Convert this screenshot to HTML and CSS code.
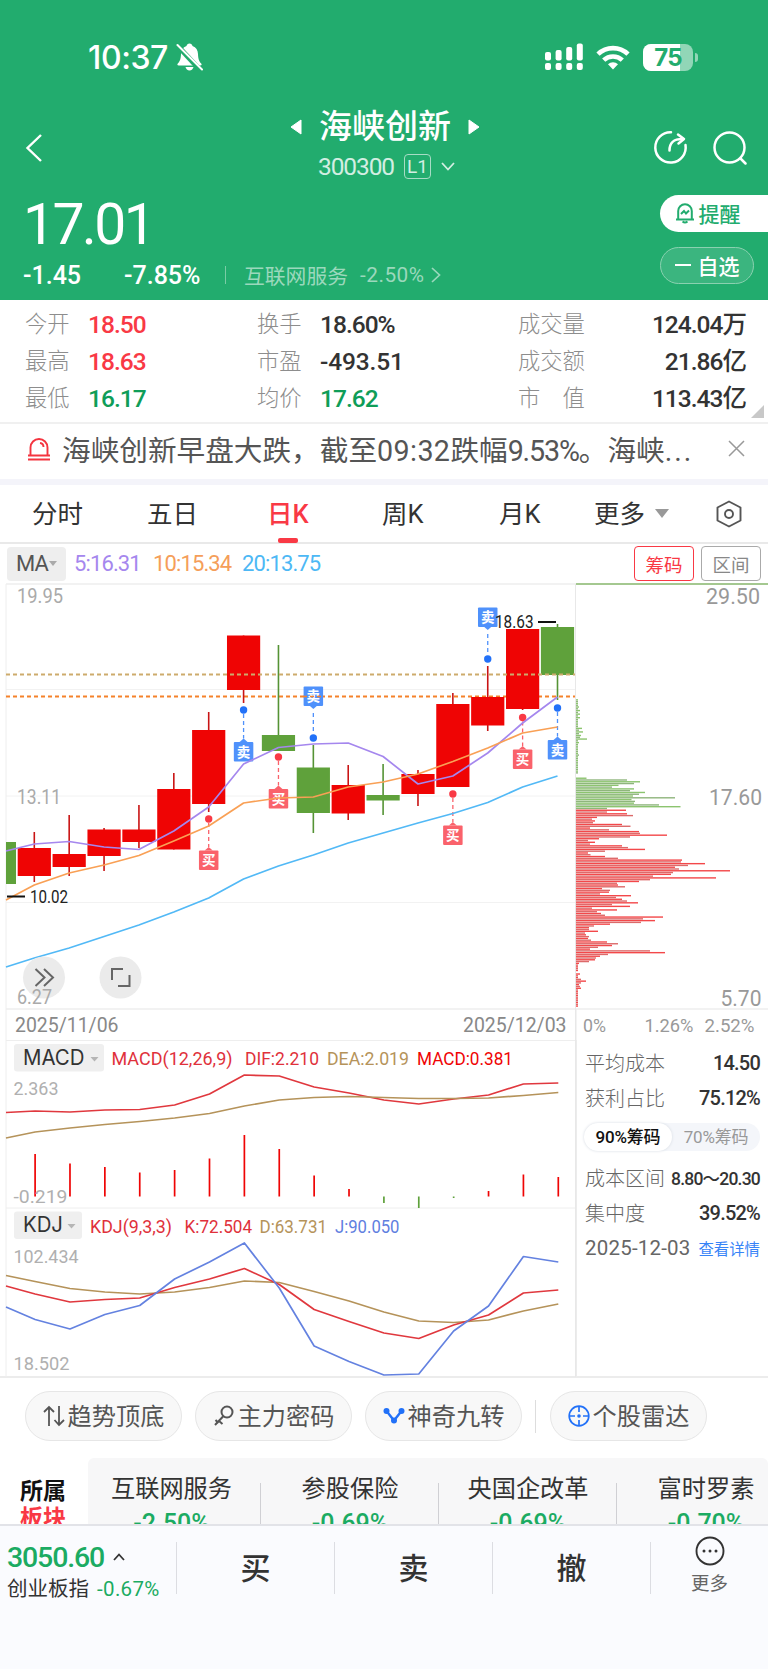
FILE: index.html
```html
<!DOCTYPE html>
<html lang="zh-CN">
<head>
    <meta charset="UTF-8">
    <meta name="viewport" content="width=device-width, initial-scale=1.0">
    <title>海峡创新 300300</title>
    <link rel="stylesheet" href="styles.css">
</head>
<body>

    <header class="header">
        <div class="status-bar">
            <div class="status-left">
                <span class="clock">10:37</span>
                <svg width="27" height="28" viewBox="0 0 27 28">
                    <path d="M13.500 0.500c-1.600 0-2.700 1-3 2.400C6.800 4.200 5.200 7 5 11c-.2 5-1 7.200-3.200 9.500-.8 1-.4 2 1 2h21.400c1.400 0 1.800-1 1-2C23 18.200 22.200 16 22 11c-.2-4-1.800-6.800-5.500-8.100-.3-1.400-1.400-2.400-3-2.400z" fill="#fff"/>
                    <path d="M9.500 24h8c-.4 2-2 3.400-4 3.400s-3.600-1.400-4-3.400z" fill="#fff"/>
                    <path d="M0 1L25 28" stroke="#22ac6e" stroke-width="5"/>
                    <path d="M1.500 2L26 26.500" stroke="#fff" stroke-width="2" stroke-linecap="round"/>
                </svg>
            </div>
            <div class="status-right">
                <svg width="38" height="28" viewBox="0 0 38 28" fill="#fff">
                    <rect x="0" y="9" width="6" height="8.500" rx="2"/>
                    <rect x="10.600" y="7" width="6" height="10.500" rx="2"/>
                    <rect x="21.200" y="4" width="6" height="13.500" rx="2"/>
                    <rect x="31.800" y="0.500" width="6" height="17" rx="2"/>
                    <rect x="0" y="20" width="6" height="7" rx="2"/>
                    <rect x="10.600" y="20" width="6" height="7" rx="2"/>
                    <rect x="21.200" y="20" width="6" height="7" rx="2"/>
                    <rect x="31.800" y="20" width="6" height="7" rx="2"/>
                </svg>
                <svg width="34" height="25" viewBox="0 0 34 25" fill="none" stroke="#fff" stroke-width="4.600">
                    <path d="M2 9.200a21.500 21.500 0 0 1 30 0"/>
                    <path d="M7.700 15.200a13.500 13.500 0 0 1 18.600 0"/>
                    <path d="M12 19.200a7.400 7.400 0 0 1 10 0L17 24.500z" fill="#fff" stroke="none"/>
                </svg>
                <div class="battery"><span class="battery-level"></span><b>75</b></div>
            </div>
        </div>

        <nav class="title-bar">
            <svg class="back" width="18" height="30" viewBox="0 0 18 30" fill="none" stroke="#fff" stroke-width="2.400"><path d="M16 2L2.500 15 16 28"/></svg>
            <div class="title">
                <div class="name-row">
                    <svg width="12" height="16" viewBox="0 0 12 16"><path d="M11 1v14L1 8z" fill="#fff" stroke="#fff" stroke-linejoin="round"/></svg>
                    <h1>海峡创新</h1>
                    <svg width="12" height="16" viewBox="0 0 12 16"><path d="M1 1v14l10-7z" fill="#fff" stroke="#fff" stroke-linejoin="round"/></svg>
                </div>
                <div class="code-row">
                    <span class="code num">300300</span>
                    <span class="level">L1</span>
                    <svg width="14" height="9" viewBox="0 0 14 9" fill="none" stroke="#d3eee2" stroke-width="1.800"><path d="M1 1l6 6.500L13 1"/></svg>
                </div>
            </div>
            <div class="title-icons">
                <svg width="35" height="35" viewBox="0 0 35 35" fill="none" stroke="#fff" stroke-width="2.500" stroke-linecap="round">
                    <path d="M18 2.200A15.200 15.200 0 1 0 32.500 15"/>
                    <path d="M16.500 20.500c0-8 4-11.500 13-11.500"/>
                    <path d="M25 4.500l6 4.600-5.500 4.400" stroke-linejoin="round"/>
                </svg>
                <svg width="35" height="35" viewBox="0 0 35 35" fill="none" stroke="#fff" stroke-width="2.500" stroke-linecap="round">
                    <circle cx="16.500" cy="17.500" r="15"/>
                    <path d="M27.500 28.500l5 5"/>
                </svg>
            </div>
        </nav>

        <div class="quote">
            <div class="quote-main">
                <div class="price num">17.01</div>
                <div class="change-row">
                    <span class="change num">-1.45</span>
                    <span class="percent num">-7.85%</span>
                    <span class="sector-link">互联网服务 <i>-2.50%</i>
                        <svg width="10" height="16" viewBox="0 0 10 16" fill="none" stroke="#9bd8bc" stroke-width="1.700"><path d="M1 1l7.500 7L1 15"/></svg>
                    </span>
                </div>
            </div>
            <div class="quote-actions">
                <button class="remind">
                    <svg width="20" height="22" viewBox="0 0 20 22" fill="none" stroke="#22ac6e" stroke-width="2">
                        <path d="M1 17.500h18M3.200 17V9a6.800 6.800 0 0 1 13.600 0v8M7.500 19.500q2.500 2 5 0"/>
                        <path d="M6 12l3-3 2 2.500 3-3"/>
                    </svg>提醒
                </button>
                <button class="favorite"><span class="minus"></span>自选</button>
            </div>
        </div>
    </header>

    <section class="stats">
        <dl><dt>今开</dt><dd class="num up">18.50</dd><dt>最高</dt><dd class="num up">18.63</dd><dt>最低</dt><dd class="num down">16.17</dd></dl>
        <dl><dt>换手</dt><dd class="num">18.60%</dd><dt>市盈</dt><dd class="num loose">-493.51</dd><dt>均价</dt><dd class="num down">17.62</dd></dl>
        <dl class="wide"><dt>成交量</dt><dd class="num">124.04万</dd><dt>成交额</dt><dd class="num">21.86亿</dd><dt>市　值</dt><dd class="num">113.43亿</dd></dl>
        <span class="corner"></span>
    </section>

    <section class="news">
        <svg width="22" height="24" viewBox="0 0 22 24" fill="none" stroke="#f4343f" stroke-width="1.900">
            <path d="M2.500 18.500V10.500a8.500 8.500 0 0 1 17 0v8M0 18.500h22M0 22.500h22M12 6q3.500.5 3.500 4"/>
        </svg>
        <p>海峡创新早盘大跌，截至<span class="time">09:32</span>跌幅<span class="num">9.53%</span>。海峡<span class="dots">...</span></p>
        <svg width="17" height="17" viewBox="0 0 17 17" stroke="#999" stroke-width="1.500"><path d="M1 1l15 15M16 1L1 16"/></svg>
    </section>

    <nav class="tabs">
        <a>分时</a>
        <a>五日</a>
        <a class="active">日K</a>
        <a>周K</a>
        <a>月K</a>
        <a class="more">更多<i></i></a>
        <svg width="28" height="28" viewBox="0 0 28 28" fill="none" stroke="#555" stroke-width="1.900">
            <path d="M14 1.500L25.500 7.500v13L14 26.500 2.500 20.500v-13z" stroke-linejoin="round"/>
            <circle cx="14" cy="14" r="4"/>
        </svg>
    </nav>

    <section class="indicator">
        <button class="ma-select">MA<i></i></button>
        <span class="ma5 num">5:16.31</span>
        <span class="ma10 num">10:15.34</span>
        <span class="ma20 num">20:13.75</span>
        <button class="chip active">筹码</button>
        <button class="chip">区间</button>
    </section>

    <main class="charts">
        <svg id="kline" class="kline" width="576" height="795" viewBox="0 583 576 795"></svg>
        <aside class="side">
            <svg id="profile" class="profile" width="192" height="457" viewBox="576 583 192 457"></svg>
            <div class="cost">
                <div class="cost-row"><span>平均成本</span><b class="num">14.50</b></div>
                <div class="cost-row"><span>获利占比</span><b class="num">75.12%</b></div>
                <div class="toggle"><span class="on">90%筹码</span><span>70%筹码</span></div>
                <div class="cost-row"><span>成本区间</span><b class="num range">8.80～20.30</b></div>
                <div class="cost-row"><span>集中度</span><b class="num">39.52%</b></div>
                <div class="cost-row"><span class="num date">2025-12-03</span><a>查看详情</a></div>
            </div>
        </aside>
    </main>

    <section class="tools">
        <button>
            <svg width="22" height="24" viewBox="0 0 22 24" fill="none" stroke="#555" stroke-width="1.800"><path d="M6 22V3M1 8l5-5 5 5M16 2v19M11.500 16l4.500 5 5-5"/></svg><span>趋势顶底</span>
        </button>
        <button>
            <svg width="22" height="24" viewBox="0 0 22 24" fill="none" stroke="#555" stroke-width="2"><circle cx="14" cy="8" r="5.500"/><path d="M10.500 12L2 21M6 17l3.500 3M2.500 16l3 3"/></svg><span>主力密码</span>
        </button>
        <button>
            <svg width="22" height="24" viewBox="0 0 22 24"><path d="M3.500 7l7.500 9.500L18.500 7" fill="none" stroke="#2271f8" stroke-width="2.400"/><circle cx="3.500" cy="7" r="3" fill="#2271f8"/><circle cx="18.500" cy="7" r="3" fill="#2271f8"/><circle cx="11" cy="16.500" r="3" fill="#2271f8"/></svg><span>神奇九转</span>
        </button>
        <div class="divider"></div>
        <button>
            <svg width="22" height="24" viewBox="0 0 22 24" fill="none" stroke="#2271f8" stroke-width="1.700"><circle cx="11" cy="12" r="9.800"/><path d="M11 2v6M11 16v6M1 12h6M15 12h6"/><circle cx="11" cy="12" r="1.800" fill="#2271f8" stroke="none"/></svg><span>个股雷达</span>
        </button>
    </section>

    <section class="sectors">
        <div class="sectors-title">所属<em>板块</em></div>
        <div class="sector-list">
            <div>互联网服务<b class="num">-2.50%</b></div>
            <div>参股保险<b class="num">-0.69%</b></div>
            <div>央国企改革<b class="num">-0.69%</b></div>
            <div>富时罗素<b class="num">-0.70%</b></div>
        </div>
    </section>

    <footer class="bottom-bar">
        <div class="index">
            <div class="index-value num">3050.60 <svg width="12" height="8" viewBox="0 0 12 8" fill="none" stroke="#333" stroke-width="1.800"><path d="M1 7l5-5.500L11 7"/></svg></div>
            <div class="index-name">创业板指 <span>-0.67%</span></div>
        </div>
        <button>买</button>
        <button>卖</button>
        <button>撤</button>
        <div class="bottom-more">
            <svg width="30" height="30" viewBox="0 0 30 30"><circle cx="15" cy="15" r="13.500" fill="none" stroke="#333" stroke-width="1.900"/><g fill="#333"><circle cx="9" cy="15" r="1.500"/><circle cx="15" cy="15" r="1.500"/><circle cx="21" cy="15" r="1.500"/></g></svg>
            更多
        </div>
    </footer>

    <script src="chart.js"></script>
</body>
</html>
```
FILE: styles.css
```css
* {
    box-sizing: border-box;
}

body {
    margin: 0;
    width: 768px;
    height: 1669px;
    overflow: hidden;
    background-color: #fff;
    color: #333;
    font-family: Roboto, "Noto Sans CJK SC", sans-serif;
}

button {
    padding: 0;
    border: none;
    background: none;
    color: inherit;
    font-family: inherit;
}

h1, p, dl, dd {
    margin: 0;
}

i, em {
    font-style: normal;
}

svg {
    display: block;
    flex: none;
}

.num {
    letter-spacing: -0.04em;
}

.up {
    color: #f93945;
}

.down {
    color: #0f9d58;
}

/* header */
.header {
    height: 300px;
    background-color: #22ac6e;
    color: #fff;
}

.status-bar {
    display: flex;
    justify-content: space-between;
    height: 100px;
    padding: 43px 70px 0 88px;
}

.status-left, .status-right {
    display: flex;
    height: 28px;
    align-items: center;
}

.status-left {
    gap: 8px;
}

.status-right {
    gap: 13px;
}

.clock {
    font-family: Inter, sans-serif;
    font-size: 32px;
    font-weight: 500;
    letter-spacing: -0.400px;
}

.battery {
    position: relative;
    width: 50px;
    height: 27px;
    margin-right: 5px;
    border-radius: 8px;
    background-color: #91d6b7;
    overflow: hidden;
    text-align: center;
}

.status-right::after {
    content: "";
    width: 3px;
    height: 9px;
    margin-left: -16px;
    border-radius: 0 3px 3px 0;
    background-color: #91d6b7;
}

.battery-level {
    position: absolute;
    inset: 0 auto 0 0;
    width: 37px;
    background-color: #fff;
}

.battery b {
    position: relative;
    color: #22ac6e;
    font: 700 24px/27px Inter, sans-serif;
    letter-spacing: -0.800px;
}

.title-bar {
    display: flex;
    justify-content: space-between;
    height: 90px;
    padding: 0 20px 0 25px;
}

.back {
    margin-top: 33px;
}

.title {
    padding-left: 74px;
}

.name-row {
    display: flex;
    align-items: center;
    justify-content: center;
    gap: 17px;
    height: 53px;
}

.name-row h1 {
    font-size: 33px;
    font-weight: 500;
    line-height: 52px;
}

.code-row {
    display: flex;
    align-items: center;
    gap: 10px;
    padding-left: 28px;
    height: 27px;
    color: #d3eee2;
}

.code {
    font-size: 24.500px;
    letter-spacing: -1.100px;
}

.level {
    width: 27px;
    height: 25px;
    border: 1px solid #a7dcc5;
    border-radius: 4px;
    font-size: 19px;
    line-height: 24px;
    text-align: center;
}

.title-icons {
    display: flex;
    gap: 25px;
    padding-top: 30px;
}

.quote {
    display: flex;
    justify-content: space-between;
}

.quote-main {
    padding-left: 23px;
}

.price {
    height: 68px;
    font-size: 57px;
    line-height: 69px;
    letter-spacing: -2.600px;
}

.change-row {
    display: flex;
    align-items: center;
    height: 34px;
    font-size: 25px;
    font-weight: 500;
}

.change {
    width: 101px;
    letter-spacing: 0;
}

.percent {
    width: 101px;
    letter-spacing: 0;
}

.sector-link {
    display: flex;
    align-items: center;
    gap: 12px;
    height: 18px;
    padding-left: 18px;
    border-left: 1px solid #7acca5;
    color: #9bd8bc;
    font-size: 20.800px;
    font-weight: 400;
}

.sector-link i {
    letter-spacing: 0.500px;
}

.sector-link svg {
    margin-left: -6px;
}

.quote-actions {
    width: 108px;
    padding-top: 5px;
}

.remind, .favorite {
    display: flex;
    align-items: center;
    justify-content: center;
    height: 37px;
    padding-bottom: 2px;
    font-size: 21px;
    font-weight: 500;
    gap: 4px;
}

.remind {
    width: 108px;
    padding-right: 13px;
    border-radius: 19px 0 0 19px;
    background-color: #fff;
    color: #22ac6e;
}

.favorite {
    width: 94px;
    margin-top: 15px;
    border: 1px solid #8ad1b0;
    border-radius: 19px;
    background-color: #3bb57f;
    gap: 7px;
}

.minus {
    width: 16px;
    height: 2px;
    background-color: #fff;
}

/* day statistics */
.stats {
    position: relative;
    display: flex;
    height: 124px;
    padding: 7px 22px 0 25px;
    border-bottom: 2px solid #f0f0f0;
}

.stats dl {
    display: grid;
    grid-template-columns: 63px auto;
    grid-auto-rows: 36.700px;
    align-items: center;
    align-content: start;
    width: 232px;
    line-height: 36px;
}

.stats dt {
    color: #8d8d8d;
    font-size: 22.300px;
    font-weight: 300;
    margin-top: -2px;
}

.stats dd {
    font-size: 24.500px;
    font-weight: 500;
    white-space: nowrap;
}

.stats .loose {
    letter-spacing: -0.005em;
}

.stats .wide {
    grid-template-columns: 75px 1fr;
    width: 228px;
    margin-left: 29px;
}

.wide dd {
    text-align: right;
}

.corner {
    position: absolute;
    right: 4px;
    bottom: 4px;
    border-left: 13px solid transparent;
    border-bottom: 13px solid #c8c8c8;
}

/* news line */
.news {
    display: flex;
    align-items: center;
    height: 61px;
    padding: 0 23px 6px 28px;
    border-bottom: 6px solid #f4f4fa;
}

.news p {
    flex: 1;
    padding: 5px 0 0 12px;
    color: #555;
    font-size: 28.650px;
    line-height: 48px;
    white-space: nowrap;
}

.news .time {
    letter-spacing: 0.400px;
}

.news .dots {
    letter-spacing: 2px;
}

/* period tabs */
.tabs {
    display: flex;
    align-items: center;
    height: 59px;
    padding-left: 32px;
    border-bottom: 2px solid #e9e9e9;
    font-size: 25.500px;
}

.tabs a {
    position: relative;
    width: 115px;
    line-height: 56px;
}

.tabs a:nth-child(2) {
    width: 120px;
}

.tabs a:nth-child(4) {
    width: 117px;
}

.tabs a:nth-child(5) {
    width: 95px;
}

.tabs .active {
    color: #f93945;
    font-weight: 500;
}

.tabs .active::after {
    content: "";
    position: absolute;
    left: 11px;
    bottom: -1px;
    width: 20px;
    height: 5px;
    border-radius: 2px;
    background-color: #f93945;
}

.tabs .more {
    display: flex;
    align-items: center;
    gap: 10px;
    width: 121px;
}

.more i {
    border: 7px solid transparent;
    border-top: 9px solid #999;
    border-bottom: 0;
}

/* moving averages */
.indicator {
    display: flex;
    align-items: center;
    height: 39px;
    padding-left: 7px;
    font-size: 22px;
}

.ma-select {
    display: flex;
    align-items: center;
    justify-content: center;
    gap: 1px;
    width: 59px;
    height: 34px;
    border-radius: 4px;
    background-color: #eee;
    color: #555;
    font-size: 22px;
    letter-spacing: -0.800px;
}

.ma-select i {
    border: 4px solid transparent;
    border-top: 5px solid #aaa;
    border-bottom: 0;
}

.ma5 {
    width: 79px;
    margin-left: 8px;
    color: #a587ee;
}

.ma10 {
    width: 89px;
    color: #f59e59;
}

.ma20 {
    flex: 1;
    color: #4db8f5;
}

.chip {
    width: 60px;
    height: 35px;
    margin-right: 7px;
    border: 1px solid #aaa;
    border-radius: 4px;
    color: #888;
    font-size: 18.500px;
}

.chip.active {
    border-color: #f93945;
    color: #f93945;
}

/* charts */
.charts {
    display: flex;
    height: 795px;
    border-bottom: 2px solid #ececec;
}

.side {
    width: 192px;
}

.kline text, .profile text {
    font-family: Roboto, "Noto Sans CJK SC", sans-serif;
}

.kline .chip-label {
    font-family: Inter, sans-serif;
}

.cost {
    padding: 5px 8px 0;
    border-left: 1px solid #ececec;
    height: 337px;
}

.cost-row {
    display: flex;
    align-items: center;
    justify-content: space-between;
    height: 35px;
    color: #666;
    font-size: 20px;
    white-space: nowrap;
}

.cost-row span {
    font-weight: 300;
}

.cost-row b {
    color: #333;
    font-size: 20px;
    font-weight: 500;
    letter-spacing: -0.040em;
}

.cost-row .range {
    font-size: 17.500px;
    letter-spacing: -0.045em;
}

.cost-row .date {
    font-size: 20.500px;
    font-weight: 400;
    letter-spacing: 0.010em;
}

.cost-row a {
    color: #3784f7;
    font-size: 15.400px;
}

.toggle {
    display: flex;
    height: 28px;
    margin: 8px 0 9px -1px;
    border-radius: 14px;
    background-color: #f4f6fa;
    color: #999;
    font-size: 17px;
    line-height: 28px;
    letter-spacing: -0.200px;
}

.toggle span {
    width: 88px;
    text-align: center;
}

.toggle .on {
    border-radius: 14px;
    background-color: #fff;
    box-shadow: 0 0 3px #d5dae2;
    color: #111;
    font-weight: 500;
}

/* tool pills */
.tools {
    display: flex;
    align-items: center;
    gap: 13px;
    height: 50px;
    margin-top: 13px;
    padding-left: 25px;
}

.tools button {
    display: flex;
    align-items: center;
    justify-content: center;
    gap: 3px;
    width: 157px;
    height: 50px;
    border: 1px solid #e6e6e6;
    border-radius: 25px;
    background-color: #f8f8f8;
    color: #555;
    font-size: 24.200px;
}

.tools span {
    padding-bottom: 3px;
}

.tools .divider {
    width: 1px;
    height: 33px;
    margin-right: 1px;
    background-color: #ddd;
}

/* sector strip */
.sectors {
    display: flex;
    height: 83px;
    padding-top: 17px;
    overflow: hidden;
}

.sectors-title {
    width: 88px;
    padding: 20px 0 0 20px;
    color: #111;
    font-size: 23px;
    font-weight: 700;
    line-height: 27px;
}

.sectors-title em {
    display: block;
    color: #f93945;
}

.sector-list {
    display: flex;
    width: 680px;
    height: 100px;
    border-radius: 6px 6px 0 0;
    background-color: #f7f7f8;
    overflow: hidden;
}

.sector-list div {
    flex: none;
    width: 178px;
    padding-top: 13px;
    font-size: 24.200px;
    line-height: 36px;
    text-align: center;
    background: linear-gradient(#d0d0d4, #d0d0d4) no-repeat 100% 25px / 1px 80px;
}

.sector-list div:first-child {
    width: 173px;
    padding-right: 6px;
}

.sector-list b {
    display: block;
    margin-top: -1px;
    color: #1bab62;
    font-size: 25px;
    font-weight: 500;
    line-height: 36px;
    letter-spacing: 0;
}

/* bottom trade bar */
.bottom-bar {
    display: flex;
    height: 145px;
    padding-top: 16px;
    border-top: 2px solid #e2e3e8;
    background-color: #fafbfe;
}

.index {
    width: 176px;
    padding-left: 7px;
}

.index-value {
    display: flex;
    align-items: center;
    gap: 9px;
    height: 30px;
    color: #1bab62;
    font-size: 28.500px;
    font-weight: 500;
}

.index-name {
    font-size: 20.500px;
    line-height: 30px;
    margin-top: 2px;
    white-space: nowrap;
}

.index-name span {
    margin-left: 3px;
    color: #1bab62;
    letter-spacing: 0.300px;
}

.bottom-bar button {
    width: 158px;
    height: 52px;
    padding-bottom: 5px;
    border-left: 1px solid #dcdde2;
    font-size: 30px;
    font-weight: 500;
}

.bottom-more {
    display: flex;
    flex-direction: column;
    align-items: center;
    width: 118px;
    height: 52px;
    border-left: 1px solid #dcdde2;
    color: #666;
    font-size: 18.500px;
    line-height: 30px;
}

.bottom-more svg {
    margin: -6px 0 3px;
}
```
FILE: chart.js
```js
const RED = '#ef0404';
const GREEN = '#5fa13b';
const STEP = 34.88;
const FIRST = 34.3;

// [direction, high, body top, body bottom, low]
const candles = [
    [1, 832, 848, 876, 882],
    [1, 815, 854, 867, 876],
    [1, 828, 829.5, 856, 871],
    [1, 805, 829.5, 842, 848],
    [1, 773, 789, 849.5, 849.5],
    [1, 712, 730, 804, 812],
    [1, 635.5, 635.5, 690, 703],
    [0, 645, 735, 751, 751],
    [0, 745, 767.5, 813, 833],
    [1, 765, 785, 813.5, 820],
    [0, 764, 795, 800.5, 815],
    [1, 770, 774, 794, 806],
    [1, 693, 704, 787, 787],
    [1, 666, 697, 725.5, 731],
    [1, 629, 629, 709, 710],
    [0, 624, 627, 675, 700]
];

// each line starts at the left edge of the plot, then one value per candle
const ma5 = [851, 844, 841.5, 847, 849.5, 831, 807, 764, 747.5, 744, 743, 756.5, 784, 776, 753, 723, 697];
const ma10 = [900, 885, 873, 865, 855.5, 841, 826, 803, 798, 797, 787, 782, 774, 761.5, 748, 733, 727];
const ma20 = [967, 958, 948, 936.5, 925, 912, 898, 879, 866, 855, 843, 833, 823, 813.5, 802.5, 787, 776];
const dif = [1112.5, 1111, 1112, 1110, 1109.5, 1105, 1094, 1075, 1076, 1087, 1093, 1100, 1104, 1099, 1095, 1084, 1083];
const dea = [1138, 1132, 1128, 1124.5, 1121.5, 1118, 1113.5, 1106, 1100, 1097.5, 1096.5, 1097.5, 1098.5, 1098.5, 1098, 1095.5, 1092.5];
const macd = [1154, 1163.5, 1167, 1172.5, 1170, 1158.5, 1135, 1149, 1175.5, 1189, 1203, 1208, 1198, 1191, 1174.5, 1177];
const k = [1286, 1294, 1302, 1299.5, 1298, 1287.5, 1279, 1268.5, 1284.5, 1309.5, 1321.5, 1333, 1338.5, 1325, 1315, 1293, 1290];
const d = [1275.5, 1281.5, 1288.5, 1292, 1294, 1292, 1287.5, 1281, 1282.5, 1291.5, 1301, 1312, 1321, 1322.5, 1320, 1311, 1304];
const j = [1307, 1319.5, 1329, 1314.5, 1305.5, 1279, 1262, 1243, 1288, 1346, 1361.5, 1375, 1374, 1331, 1306, 1256.5, 1262];

// [candle index, label, dot y, box top]
const marks = [
    [5, '买', 819, 850.5],
    [6, '卖', 710, 742],
    [7, '买', 757, 789],
    [8, '卖', 738, 686.5],
    [12, '买', 794, 825.5],
    [13, '卖', 659, 607.5],
    [14, '买', 717.5, 749.5],
    [15, '卖', 708, 740]
];

const profile = [
    2, 2, 2, 2, 3, 2, 4, 2, 4, 2, 4, 2, 2, 2, 2, 2, 6, 3, 7, 3, 5, 4, 11, 2, 3, 2, 2, 2, 2, 2, 2, 3, 2, 2, 2, 2, 2, 2, 2, 2, 2, 2,
    0, 0, 10.5, 51, 64, 58, 42.5, 36, 58, 54, 69, 63, 57, 99, 55.5, 59, 58, 83, 104.5, 31,
    50, 31, 51, 57, 21, 16, 19, 17, 46, 54.5, 14, 33, 63, 64, 91, 54, 23, 12, 19, 14, 46, 52, 69, 29, 12, 14.5, 29, 42,
    106, 105, 129, 112, 99, 103, 154, 97, 95, 77, 140, 74, 63, 41, 42, 49, 26, 34, 33, 24, 55, 40, 46, 51, 62, 36, 54, 16, 41, 21, 25, 29,
    87, 67, 79, 65, 34, 18, 13, 13, 22, 9, 10, 13, 12, 15, 31, 42, 36, 22, 14, 74, 89, 32, 24, 20, 19, 13, 3, 2, 2, 2, 2,
    0, 4, 2, 2, 5, 10, 5, 3, 4, 5, 2, 2, 2, 2, 2, 2, 2, 2, 2, 2
];

const cx = i => FIRST + i * STEP;

function line(x1, y1, x2, y2, color, width = 1, extra = '') {
    return `<line x1="${x1}" y1="${y1}" x2="${x2}" y2="${y2}" stroke="${color}" stroke-width="${width}" ${extra}/>`;
}

function rect(x, y, w, h, fill, rx = 0) {
    return `<rect x="${x}" y="${y}" width="${w}" height="${h}" rx="${rx}" fill="${fill}"/>`;
}

function label(x, y, width, size, color, text, extra = '') {
    return `<text x="${x}" y="${y}" font-size="${size}" fill="${color}" textLength="${width}" lengthAdjust="spacingAndGlyphs" ${extra}>${text}</text>`;
}

function curve(values, color, offset = 0) {
    const points = values.map((y, i) => i === 0 ? `6,${y}` : `${cx(i - 1) + offset},${y}`);
    return `<polyline points="${points.join(' ')}" fill="none" stroke="${color}" stroke-width="1.700" stroke-linejoin="round"/>`;
}

function drawMark([index, text, dot, top]) {
    const x = cx(index);
    const buy = text === '买';
    const light = buy ? '#fa626b' : '#4f91fb';
    const above = top < dot;
    const edge = above ? top + 19 : top;
    const tip = above ? edge + 3.5 : edge - 3.5;
    return line(x, above ? tip + 4 : dot + 4, x, above ? dot - 4 : tip, light, 1.300, 'stroke-dasharray="4 3"')
        + `<circle cx="${x}" cy="${dot}" r="3.700" fill="${buy ? '#f93945' : '#2271f8'}"/>`
        + rect(x - 9.75, top, 19.5, 19.5, light, 1)
        + `<path d="M${x - 4} ${edge}L${x} ${tip}L${x + 4} ${edge}z" fill="${light}"/>`
        + `<text x="${x}" y="${top + 14.5}" font-size="13.500" font-weight="700" fill="#fff" text-anchor="middle">${text}</text>`;
}

function drawKline() {
    let out = '';
    out += line(6, 584, 576, 584, '#eee', 1.500);
    [689.5, 796, 902.5].forEach(y => out += line(6, y, 576, y, '#f2f2f2', 1));
    out += line(6, 1009, 576, 1009, '#eee', 1.500);
    out += line(6, 1040.5, 576, 1040.5, '#eee');
    out += line(6, 1208, 576, 1208, '#eee');
    out += line(6, 584, 6, 1377, '#eee');
    out += line(575.5, 584, 575.5, 1377, '#e8e8e8');

    out += label(17, 603, 46, 20, '#aaa', '19.95');
    out += label(17, 804, 44, 20, '#aaa', '13.11');

    out += line(6, 696.5, 575, 696.5, '#f5822a', 1.800, 'stroke-dasharray="4 3"');
    out += rect(6, 842, 10, 42, GREEN);
    candles.forEach(([up, high, top, bottom, low], i) => {
        const color = up ? RED : GREEN;
        out += line(cx(i), high, cx(i), low, up ? '#c91414' : '#559335', 1.600);
        out += rect(cx(i) - 16.6, top, 33.2, bottom - top, color);
    });
    out += line(6, 674.5, 575, 674.5, '#cdab6c', 1.800, 'stroke-dasharray="4 3"');
    marks.forEach(mark => out += drawMark(mark));
    out += line(303, 696.5, 324, 696.5, '#f5822a', 1.500, 'stroke-dasharray="4 3"');
    out += curve(ma5, '#a587ee') + curve(ma10, '#f9a055') + curve(ma20, '#52b9f6');

    out += label(495, 628, 38.5, 17.500, '#222', '18.63');
    out += line(538, 622, 556, 622, '#111', 2);
    out += label(30, 903, 38, 17.500, '#222', '10.02');
    out += line(7, 896.5, 25, 896.5, '#111', 2);

    out += '<circle cx="44" cy="977.500" r="21" fill="#ebebeb"/><circle cx="120.500" cy="977.500" r="21" fill="#ebebeb"/>';
    out += '<path d="M35.500 969l9 8.500-9 8.500M44 969l9 8.500-9 8.500M123 969h-11v11M118 986h11.500v-11" fill="none" stroke="#666" stroke-width="2"/>';
    out += label(17, 1004, 35, 20, '#aaa', '6.27');
    out += label(15, 1032, 103.5, 19.500, '#888', '2025/11/06');
    out += label(463, 1032, 103.5, 19.500, '#888', '2025/12/03');

    // MACD
    out += rect(14, 1044, 90, 27.5, '#efefef', 3);
    out += label(23, 1064.5, 61.5, 21, '#333', 'MACD', 'class="chip-label"');
    out += '<path d="M90.500 1057h8l-4 4.500z" fill="#b5b5b5"/>';
    out += label(111.5, 1065, 121, 18.500, '#e0313b', 'MACD(12,26,9)');
    out += label(245, 1065, 74, 18.500, '#e0313b', 'DIF:2.210');
    out += label(327, 1065, 82, 18.500, '#b5935a', 'DEA:2.019');
    out += label(417, 1065, 96, 18.500, RED, 'MACD:0.381');
    out += label(13.5, 1095, 45, 19, '#b0b0b0', '2.363');
    macd.forEach((y, i) => out += line(cx(i) + 0.8, 1196.5, cx(i) + 0.8, y, y < 1196 ? RED : GREEN, 1.700));
    out += label(13.5, 1202.5, 54, 19, '#b0b0b0', '-0.219');
    out += curve(dif, '#e0383e', 0.8) + curve(dea, '#b5935a', 0.8);

    // KDJ
    out += rect(14, 1211.5, 68, 27.5, '#efefef', 3);
    out += label(23, 1232, 40, 21, '#333', 'KDJ', 'class="chip-label"');
    out += '<path d="M67.500 1224h8l-4 4.500z" fill="#b5b5b5"/>';
    out += label(90, 1232.5, 82, 18.500, '#e0313b', 'KDJ(9,3,3)');
    out += label(184.5, 1232.5, 67.5, 18.500, '#e0313b', 'K:72.504');
    out += label(259.5, 1232.5, 67.5, 18.500, '#b5935a', 'D:63.731');
    out += label(335, 1232.5, 64.5, 18.500, '#5f80df', 'J:90.050');
    out += label(13.5, 1262.5, 65, 19, '#b0b0b0', '102.434');
    out += label(13.5, 1370, 56, 19, '#b0b0b0', '18.502');
    out += curve(d, '#b5935a', 0.8) + curve(k, '#e0383e', 0.8) + curve(j, '#6482e0', 0.8);
    document.getElementById('kline').innerHTML = out;
}

function drawProfile() {
    let out = line(576, 584, 768, 584, '#a4c890', 1.800);
    out += line(576, 1009, 768, 1009, '#eee', 1.500);
    out += line(576, 1040.5, 768, 1040.5, '#eee');
    out += line(576, 1009, 576, 1040, '#e8e8e8');
    profile.forEach((width, i) => {
        const colors = i < 62 ? ['#8cc46f', '#8fb57d'] : ['#f3484a', '#dc6a6a'];
        out += rect(576, 699.2 + i * 1.78, width, 1.4, colors[i % 2]);
    });
    out += label(706, 604, 54, 22.500, '#999', '29.50');
    out += label(709, 804.5, 53, 22.500, '#999', '17.60');
    out += label(720.5, 1005.5, 41, 22.500, '#999', '5.70');
    out += label(583, 1032, 23, 19, '#999', '0%');
    out += label(644.5, 1032, 49, 19, '#999', '1.26%');
    out += label(704.5, 1032, 50, 19, '#999', '2.52%');
    document.getElementById('profile').innerHTML = out;
}

drawKline();
drawProfile();
```
